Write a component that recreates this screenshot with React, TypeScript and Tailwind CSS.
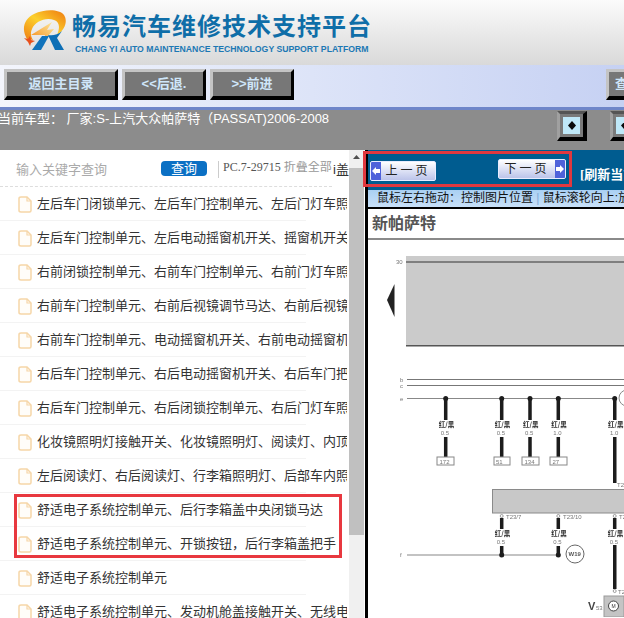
import React from "react";

const ROWS = [
  "左后车门闭锁单元、左后车门控制单元、左后门灯车照",
  "左后车门控制单元、左后电动摇窗机开关、摇窗机开关",
  "右前闭锁控制单元、右前车门控制单元、右前门灯车照",
  "右前车门控制单元、右前后视镜调节马达、右前后视镜",
  "右前车门控制单元、电动摇窗机开关、右前电动摇窗机",
  "右后车门控制单元、右后电动摇窗机开关、右后车门把",
  "右后车门控制单元、右后闭锁控制单元、右后门灯车照",
  "化妆镜照明灯接触开关、化妆镜照明灯、阅读灯、内顶",
  "左后阅读灯、右后阅读灯、行李箱照明灯、后部车内照",
  "舒适电子系统控制单元、后行李箱盖中央闭锁马达",
  "舒适电子系统控制单元、开锁按钮，后行李箱盖把手",
  "舒适电子系统控制单元",
  "舒适电子系统控制单元、发动机舱盖接触开关、无线电",
];

function Logo() {
  return (
    <svg width="46" height="42" viewBox="0 0 46 42" className="shrink-0">
      <defs>
        <linearGradient id="ring" x1="0" y1="1" x2="1" y2="0">
          <stop offset="0" stopColor="#ef7d12" />
          <stop offset="0.5" stopColor="#fcd02c" />
          <stop offset="1" stopColor="#ee7a10" />
        </linearGradient>
        <linearGradient id="bolt" x1="0" y1="1" x2="1" y2="0">
          <stop offset="0" stopColor="#f58a14" />
          <stop offset="1" stopColor="#fde9a0" />
        </linearGradient>
      </defs>
      <path
        d="M6 29C0 19 3 9 13 4C24 -1 38 -1 43 5C47 11 44 20 36 25C39 18 39 12 33 10C24 7 14 12 11 19C9 23 10 27 12 30Z"
        fill="url(#ring)"
      />
      <path d="M10 25L31 12L26 20L33 19L22 32L24 25Z" fill="url(#bolt)" />
      <path d="M3 28L7 29L9 26L10 30L14 31L10 33L9 36L7 32Z" fill="#e8501c" />
      <path d="M11 40L21 26L28 26L20 40Z" fill="#1173bb" />
      <path d="M27 25C31 26 37 25 41 21L36 28L43 40L34 40Z" fill="#0d6fb6" />
    </svg>
  );
}

function NavButton({ label, width }: { label: string; width: string }) {
  return (
    <button
      className={`${width} flex h-[31px] shrink-0 items-center justify-center border-t-[3px] border-r-[3px] border-b-[4px] border-l-[3px] border-t-[#c4c4c4] border-r-black border-b-black border-l-[#c4c4c4] bg-[#777777] text-[13px] font-bold whitespace-nowrap text-[#cfe6fa]`}
    >
      {label}
    </button>
  );
}

function ArrowButton() {
  return (
    <div className="flex h-[30px] w-[30px] shrink-0 items-center justify-center border-t-[3px] border-r-[4px] border-b-[4px] border-l-[3px] border-t-[#555555] border-r-black border-b-black border-l-[#a0a0a0] bg-[#7a7a7a]">
      <div className="flex h-[17px] w-[17px] items-center justify-center bg-[#bfe8f8]">
        <svg width="8" height="9" viewBox="0 0 8 9">
          <path d="M4 0L8 4.500L4 9L0 4.500Z" fill="#0a0a0a" />
        </svg>
      </div>
    </div>
  );
}

function FileIcon() {
  return (
    <svg width="14" height="17" viewBox="0 0 14 17" className="shrink-0">
      <path
        d="M3 1H9L13 5V14.500Q13 16 11.500 16H3Q1 16 1 14.500V2.500Q1 1 3 1Z"
        fill="#fffdf9"
        stroke="#f6d6a8"
        strokeWidth="1.500"
      />
      <path d="M9 1V5H13" fill="none" stroke="#f6d6a8" strokeWidth="1.200" />
    </svg>
  );
}

function PageButton({ label, dir, width }: { label: string; dir: "left" | "right"; width: string }) {
  const arrow = (
    <div className="flex h-full w-[10px] shrink-0 items-center justify-center bg-[#4f62da]">
      <svg width="8" height="8" viewBox="0 0 8 8">
        <path d={dir === "left" ? "M0 4L4 0V2H8V6H4V8Z" : "M8 4L4 0V2H0V6H4V8Z"} fill="#ffffff" />
      </svg>
    </div>
  );
  return (
    <div
      className={`${width} flex h-[20px] items-stretch overflow-hidden rounded-[2px] border border-[#e8ecff] bg-gradient-to-b from-white to-[#bcc4ea] text-[12px] text-[#222222]`}
    >
      {dir === "left" && arrow}
      <span className="flex-1 text-center leading-[18px] tracking-[3px]">{label}</span>
      {dir === "right" && arrow}
    </div>
  );
}

function Diagram() {
  const top = [
    { x: 445.7, size: "0.5", id: "172", bx: 437, bw: 17 },
    { x: 501.7, size: "0.5", id: "51", bx: 494, bw: 16 },
    { x: 530, size: "0.5", id: "134", bx: 522, bw: 17 },
    { x: 558.3, size: "1.0", id: "27", bx: 550, bw: 17 },
  ];
  const wire = "#1c1c1c";
  const small = { fontSize: 6, fill: "#777777", fontFamily: "Liberation Sans, sans-serif" };
  const cn = { fontSize: 6.5, fontWeight: 700, fill: "#333333", fontFamily: "Noto Sans CJK SC, sans-serif" };
  return (
    <svg viewBox="368 241 256 377" className="block h-[377px] w-[256px]">
      <defs>
        <filter id="soft" x="-5%" y="-5%" width="110%" height="110%">
          <feGaussianBlur stdDeviation="0.35" />
        </filter>
      </defs>
      <g filter="url(#soft)">
        <rect x="406" y="257" width="218" height="90" fill="#cbcbcb" />
        <rect x="406" y="262" width="218" height="2" fill="#7f7f7f" />
        <rect x="406" y="346" width="218" height="1.500" fill="#555555" />
        <text x="396" y="265" {...small}>30</text>
        <path d="M394.500 285L387 301L394.500 318Z" fill="#222222" />

        <text x="400" y="383" {...small}>b</text>
        <text x="400" y="389" {...small}>c</text>
        <text x="400" y="402" {...small}>e</text>
        <rect x="407" y="380" width="217" height="1" fill="#777777" />
        <rect x="407" y="386" width="217" height="1" fill="#777777" />
        <rect x="407" y="399" width="206" height="1" fill="#888888" />
        <circle cx="627" cy="399" r="8" fill="#ffffff" stroke="#888888" />

        {top.map((t) => (
          <g key={t.id}>
            <circle cx={t.x} cy="399.500" r="2.500" fill={wire} />
            <rect x={t.x - 1.75} y="399" width="3.500" height="22" fill={wire} />
            <text x={t.x - 7} y="428" {...cn}>红/黑</text>
            <text x={t.x - 5} y="436" {...small}>{t.size}</text>
            <rect x={t.x - 1.75} y="438" width="3.500" height="20" fill={wire} />
            <rect x={t.bx} y="458" width={t.bw} height="8" fill="#ffffff" stroke="#888888" />
            <text x={t.bx + t.bw / 2 - 6} y="464.500" {...small}>{t.id}</text>
          </g>
        ))}

        <circle cx="614.700" cy="399.500" r="2.500" fill={wire} />
        <rect x="613" y="399" width="3.500" height="22" fill={wire} />
        <text x="608" y="428" {...cn}>红/黑</text>
        <text x="610" y="436" {...small}>1.0</text>
        <rect x="613" y="438" width="3.500" height="46" fill={wire} />
        <text x="617" y="488" {...small}>T2</text>

        <rect x="492.500" y="490.500" width="132" height="23.500" fill="#c8c8c8" stroke="#8a8a8a" />

        {[501.7, 558.3, 614.7].map((x) => (
          <g key={x}>
            <circle cx={x} cy="517" r="1.500" fill="#ffffff" stroke="#777777" strokeWidth="0.700" />
            <rect x={x - 1.75} y="519" width="3.500" height="11" fill={wire} />
            <text x={x - 7} y="537" {...cn}>红/黑</text>
            <text x={x - 5} y="545" {...small}>0.5</text>
          </g>
        ))}
        <text x="506" y="520" {...small}>T23/7</text>
        <text x="563" y="520" {...small}>T23/10</text>
        <text x="619" y="520" {...small}>T2</text>

        <text x="400" y="558" {...small}>f</text>
        <rect x="407" y="555.500" width="151" height="1" fill="#888888" />
        {[501.7, 558.3].map((x) => (
          <g key={x}>
            <rect x={x - 1.75} y="547" width="3.500" height="9" fill={wire} />
            <circle cx={x} cy="556" r="2.500" fill={wire} />
          </g>
        ))}
        <circle cx="575" cy="555" r="9" fill="#ffffff" stroke="#666666" />
        <text x="568.500" y="557" fontSize="6" fontWeight="700" fill="#555555" fontFamily="Liberation Sans, sans-serif">W19</text>

        <rect x="613" y="546" width="3.500" height="44" fill={wire} />
        <circle cx="614.700" cy="592" r="1.500" fill="#ffffff" stroke="#777777" strokeWidth="0.700" />
        <text x="618" y="595" {...small}>T2</text>
        <rect x="604" y="597" width="20" height="21" fill="#c4c4c4" stroke="#999999" />
        <circle cx="613.500" cy="607" r="5" fill="#ffffff" stroke="#444444" />
        <text x="611.500" y="609" fontSize="5" fill="#333333" fontFamily="Liberation Sans, sans-serif">M</text>
        <text x="588" y="611" fontSize="11" fontWeight="700" fill="#444444" fontFamily="Liberation Sans, sans-serif">V</text>
        <text x="596" y="611" {...small}>53</text>
      </g>
    </svg>
  );
}

export default function App() {
  return (
    <div className="relative flex h-[618px] w-[624px] flex-col overflow-hidden bg-white [font-family:'Liberation_Sans','Noto_Sans_CJK_SC',sans-serif]">
      <header className="flex h-[65px] shrink-0 items-start gap-[5px] bg-gradient-to-b from-[#fbfbfb] to-[#d9d9d9] pt-[10px] pl-[21px]">
        <Logo />
        <div className="flex flex-col">
          <span className="text-[24px] leading-[34px] font-bold tracking-[1px] text-[#0f6ea8]">
            畅易汽车维修技术支持平台
          </span>
          <span className="pl-[3px] text-[8.7px] leading-[10px] font-bold whitespace-nowrap text-[#1c78b4]">
            CHANG YI AUTO MAINTENANCE TECHNOLOGY SUPPORT PLATFORM
          </span>
        </div>
      </header>

      <nav className="flex h-[45px] shrink-0 items-start gap-1 border-b-[3px] border-[#6f86c9] bg-gradient-to-r from-[#f3f5fc] via-[#dde4f8] to-[#c6d1f3] pt-[4px] pl-[4px]">
        <NavButton label="返回主目录" width="w-[114px]" />
        <NavButton label="<<后退." width="w-[84px]" />
        <NavButton label=">>前进" width="w-[84px]" />
        <div className="ml-[308px] shrink-0">
          <NavButton label="查询" width="w-[44px]" />
        </div>
      </nav>

      <div className="flex h-[40px] shrink-0 items-start bg-[#8c8c8c]">
        <span className="-ml-[2px] w-[559px] shrink-0 text-[13px] leading-[17px] whitespace-nowrap text-white">
          当前车型： 厂家:S-上汽大众帕萨特（PASSAT)2006-2008
        </span>
        <div className="mt-[1px] flex shrink-0 gap-[23px]">
          <ArrowButton />
          <ArrowButton />
        </div>
      </div>

      <main className="flex min-h-0 flex-1">
        <section className="w-[349px] shrink-0 overflow-hidden">
          <div className="relative flex h-[37px] items-start pt-[11px] pl-[16px]">
            <span className="w-[145px] shrink-0 pt-[1px] text-[13px] leading-[16px] text-[#aaaaaa]">输入关键字查询</span>
            <span className="h-[15px] w-[46px] shrink-0 rounded-[4px] bg-[#0b70c4] text-center text-[13px] leading-[15px] text-white">
              查询
            </span>
            <span className="ml-[11px] h-[17px] w-px shrink-0 bg-[#cccccc]" />
            <span className="ml-[4px] w-[109px] shrink-0 overflow-hidden text-[12px] leading-[12px] whitespace-nowrap text-[#555555] [font-family:'Liberation_Serif','Noto_Sans_CJK_SC',serif]">
              PC.7-29715 <span className="text-[#999999]">折叠全部</span>
            </span>
            <span className="pt-[1px] pl-[1px] text-[13px] leading-[16px] whitespace-nowrap text-[#333333]">i盖</span>
            <span className="absolute bottom-0 left-0 w-[332px] border-b border-dashed border-[#dddddd]" />
          </div>
          <ul>
            {ROWS.map((row, i) => (
              <li key={i} className="relative mr-[2px] flex h-[34px] items-center gap-[5px] overflow-hidden pl-[18px] whitespace-nowrap">
                <FileIcon />
                <span className="text-[13px] text-[#333333]">{row}</span>
                <span className="absolute right-[41px] bottom-0 left-0 h-px bg-[#f3f3f3]" />
              </li>
            ))}
          </ul>
        </section>

        <aside className="w-[15px] shrink-0 bg-[#f0f0f0] pt-[4px]">
          <svg width="15" height="6" viewBox="0 0 15 6" className="block">
            <path d="M4 5L7.500 1L11 5Z" fill="#505050" />
          </svg>
          <div className="mt-[8px] h-[367px] bg-[#c0c0c0]" />
        </aside>

        <div className="ml-px w-[3px] shrink-0 bg-black" />

        <section className="min-w-0 flex-1 overflow-hidden">
          <div className="flex h-[40px] bg-[#005c90] pl-[2px]">
            <div className="w-[128px] shrink-0 pt-[11px]">
              <PageButton label="上一页" dir="left" width="w-[66px]" />
            </div>
            <div className="w-[82px] shrink-0 pt-[9px]">
              <PageButton label="下一页" dir="right" width="w-[68px]" />
            </div>
            <span className="pt-[16px] text-[13px] leading-[18px] font-bold whitespace-nowrap text-white [font-family:'Liberation_Serif','Noto_Sans_CJK_SC',serif]">
              [刷新当前页面]
            </span>
          </div>
          <div className="h-[19px] border-b-2 border-black bg-gradient-to-b from-[#a9d0f3] to-[#c8e0f8] pl-[9px] text-[12px] leading-[17px] whitespace-nowrap text-[#111111]">
            鼠标左右拖动：控制图片位置 <span className="text-[#7fa9d6]">|</span> 鼠标滚轮向上:放大图片
          </div>
          <div className="flex h-[31px] items-center border-b-2 border-[#8a8a8a] pl-[4px] text-[16px] font-bold text-[#555555]">
            新帕萨特
          </div>
          <Diagram />
        </section>
      </main>

      <div className="pointer-events-none absolute top-[151px] left-[363px] h-[36px] w-[209px] border-[3px] border-[#e0383f]" />
      <div className="pointer-events-none absolute top-[494px] left-[14px] h-[64px] w-[328px] border-[3px] border-[#e8383f]" />
    </div>
  );
}
